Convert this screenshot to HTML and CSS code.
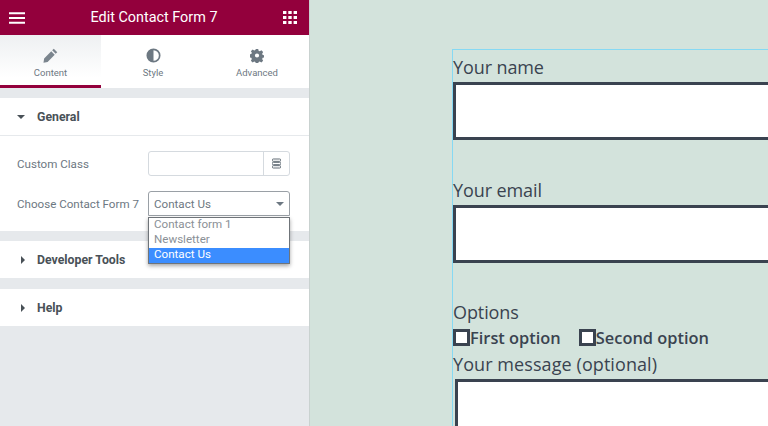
FILE: index.html
```html
<!DOCTYPE html>
<html lang="en">
<head>
<meta charset="utf-8">
<title>Edit Contact Form 7</title>
<link rel="stylesheet" href="styles.css">
</head>
<body>
<div class="app">
  <aside class="panel">
    <header class="topbar">
      <svg class="top-icon" viewBox="0 0 17 12" width="16" height="12"><path d="M0 0h17v2H0zM0 5h17v2H0zM0 10h17v2H0z" fill="#fff"/></svg>
      <span class="top-title">Edit Contact Form 7</span>
      <svg class="top-icon" viewBox="0 0 14 13" width="14" height="13"><path d="M0 0h3.4v3H0zM5.300 0h3.400v3H5.300zM10.600 0H14v3h-3.400zM0 5h3.400v3H0zM5.300 5h3.400v3H5.300zM10.600 5H14v3h-3.400zM0 10h3.400v3H0zM5.300 10h3.400v3H5.300zM10.600 10H14v3h-3.400z" fill="#fff"/></svg>
    </header>
    <nav class="tabs">
      <div class="tab tab-active">
        <svg viewBox="0 0 16 16" width="15" height="15"><path d="M11.500 0.800l3.700 3.700-1.700 1.700-3.700-3.700zM8.800 3.500l3.700 3.700-7.600 7.600-4.400.8.700-4.500z" fill="#7b858e"/></svg>
        <span>Content</span>
      </div>
      <div class="tab">
        <svg viewBox="0 0 16 16" width="15" height="15"><circle cx="8" cy="8" r="6.600" fill="none" stroke="#6d7882" stroke-width="1.800"/><path d="M8 1.400a6.600 6.600 0 0 0 0 13.200z" fill="#6d7882"/></svg>
        <span>Style</span>
      </div>
      <div class="tab">
        <svg viewBox="0 0 16 16" width="14" height="14"><path d="M6.600.6h2.800l.4 2 1.400.6 1.800-1.100 2 2-1.100 1.800.6 1.400 2 .4v2.600l-2 .4-.6 1.400 1.100 1.800-2 2-1.800-1.100-1.400.6-.4 2H6.600l-.4-2-1.400-.6-1.800 1.100-2-2 1.100-1.800-.6-1.400-2-.4V6.700l2-.4.6-1.400-1.100-1.800 2-2 1.800 1.100 1.400-.6zM8 5.600a2.400 2.400 0 1 0 0 4.800a2.400 2.400 0 0 0 0-4.800z" fill="#6d7882" fill-rule="evenodd"/></svg>
        <span>Advanced</span>
      </div>
    </nav>
    <section class="section section-general">
      <div class="section-head section-head-open">
        <span class="caret caret-down"></span>
        <span>General</span>
      </div>
      <div class="section-body">
        <div class="field">
          <label class="field-label">Custom Class</label>
          <div class="class-input">
            <span class="class-box"></span>
            <span class="class-btn">
              <svg viewBox="0 0 10 12" width="9" height="11"><path d="M1.500 1h7a.8.8 0 0 1 0 2.600h-7a.8.8 0 0 1 0-2.600zM1.500 4.700h7a.8.8 0 0 1 0 2.600h-7a.8.8 0 0 1 0-2.600zM1.500 8.400h7a.8.8 0 0 1 0 2.600h-7a.8.8 0 0 1 0-2.600z" fill="#fff" stroke="#5f6a73" stroke-width="1.100"/></svg>
            </span>
          </div>
        </div>
        <div class="field">
          <label class="field-label">Choose Contact Form 7</label>
          <div class="select">
            <span>Contact Us</span>
            <span class="select-arrow"></span>
            <ul class="options">
              <li>Contact form 1</li>
              <li>Newsletter</li>
              <li class="option-on">Contact Us</li>
            </ul>
          </div>
        </div>
      </div>
    </section>
    <section class="section">
      <div class="section-head"><span class="caret caret-right"></span><span>Developer Tools</span></div>
    </section>
    <section class="section section-help">
      <div class="section-head"><span class="caret caret-right"></span><span>Help</span></div>
    </section>
  </aside>
  <main class="preview">
    <form class="form">
      <div class="row row-name">
        <div class="form-label">Your name</div>
        <div class="text-box"></div>
      </div>
      <div class="row row-email">
        <div class="form-label">Your email</div>
        <div class="text-box"></div>
      </div>
      <div class="row row-options">
        <div class="form-label">Options</div>
        <div class="checks">
          <span class="check"><span class="check-box"></span>First option</span>
          <span class="check"><span class="check-box"></span>Second option</span>
        </div>
      </div>
      <div class="row row-message">
        <div class="form-label form-label-long">Your message (optional)</div>
        <div class="text-box message-box"></div>
      </div>
    </form>
  </main>
</div>
</body>
</html>
```
FILE: styles.css
```css
* { box-sizing: border-box; }
html, body { margin: 0; height: 100%; overflow: hidden; }
body { font-family: Roboto, "Liberation Sans", sans-serif; }
.app { display: flex; width: 768px; height: 426px; overflow: hidden; }

.panel { width: 310px; flex: none; background: #e6e9ec; border-right: 1px solid #c9d2d0; }
.topbar { height: 35px; background: #93003c; color: #fff; display: flex; align-items: center; justify-content: space-between; padding: 0 12px 0 9px; }
.top-title { font-size: 14.4px; font-weight: 400; }

.tabs { height: 53px; background: #fff; display: flex; margin-bottom: 10px; }
.tab { flex: 1; display: flex; flex-direction: column; align-items: center; padding-top: 13px; gap: 4px; font-size: 9.5px; color: #6d7882; }
.tab svg { height: 15px; flex: none; }
.tab span { line-height: 12px; }
.tab-active { flex: none; width: 101px; background: linear-gradient(to bottom, #eef0f2, #fff 85%); border-bottom: 3px solid #93003c; }

.section { background: #fff; margin-bottom: 10px; }
.section-help { margin-top: 11px; }
.section-head { height: 37px; display: flex; align-items: center; padding-left: 21px; font-size: 12.3px; font-weight: 700; color: #495157; }
.section-head-open { height: 38px; border-bottom: 1px solid #e6e9ec; padding-left: 17px; }
.caret { display: block; width: 0; height: 0; margin-right: 12px; }
.caret-down { border-left: 4px solid transparent; border-right: 4px solid transparent; border-top: 4px solid #495157; margin-right: 12px; }
.caret-right { border-top: 4px solid transparent; border-bottom: 4px solid transparent; border-left: 4px solid #495157; margin-right: 12px; }

.section-body { height: 95px; padding: 15px 19px 0 17px; display: flex; flex-direction: column; gap: 15px; }
.field { display: flex; align-items: center; justify-content: space-between; height: 25px; }
.field-label { font-size: 11.6px; color: #6d7882; white-space: nowrap; }
.class-input { width: 142px; height: 25px; display: flex; border: 1px solid #d5dadf; border-radius: 3px; }
.class-box { flex: 1; }
.class-btn { width: 26px; border-left: 1px solid #d5dadf; display: flex; align-items: center; justify-content: center; }

.select { position: relative; width: 142px; height: 25px; border: 1px solid #9aa0a6; border-radius: 3px 3px 0 0; display: flex; align-items: center; justify-content: space-between; padding: 0 5px; font-size: 11.6px; color: #6d7882; }
.select-arrow { width: 0; height: 0; border-left: 4px solid transparent; border-right: 4px solid transparent; border-top: 4px solid #6d7882; }
.options { position: absolute; left: -1px; top: 25px; width: 142px; height: 47px; margin: 0; padding: 0; list-style: none; background: #fff; border: 1px solid #6f7479; box-shadow: 0 2px 4px rgba(0,0,0,.35); font-size: 11.6px; line-height: 13px; color: #8a9096; }
.options li { height: 15px; padding-left: 5px; }
.options .option-on { background: #3b8dff; color: #fff; }

.preview { flex: 1; min-width: 0; background: #d3e3dc; padding: 49px 0 0 142px; overflow: hidden; }
.form { width: 400px; height: 500px; border: 1px solid #86d9f3; border-right: 0; border-bottom: 0; font-family: "Open Sans", "Noto Sans", sans-serif; font-size: 18px; color: #3a4350; }
.form-label { line-height: 24px; height: 24px; letter-spacing: -0.1px; }
.form-label-long { letter-spacing: 0.08px; }
.text-box { width: 380px; height: 58px; background: #fff; border: 3px solid #3a4350; }
.row-name { padding-top: 5px; }
.row-email { padding-top: 36px; margin-top: 2px; }
.row-email .form-label { margin-bottom: 3px; }
.row-name .form-label { margin-bottom: 3px; }
.row-options { padding-top: 37px; }
.checks { display: flex; gap: 18px; font-weight: 600; font-size: 16.4px; height: 24px; align-items: center; margin-top: 1px; }
.check { display: flex; align-items: center; }
.check-box { width: 17px; height: 17px; border: 3px solid #3a4350; background: #fff; }
.row-message { padding-top: 3px; }
.row-message .form-label { margin-bottom: 3px; }
.message-box { margin-left: 2px; height: 80px; }
```
